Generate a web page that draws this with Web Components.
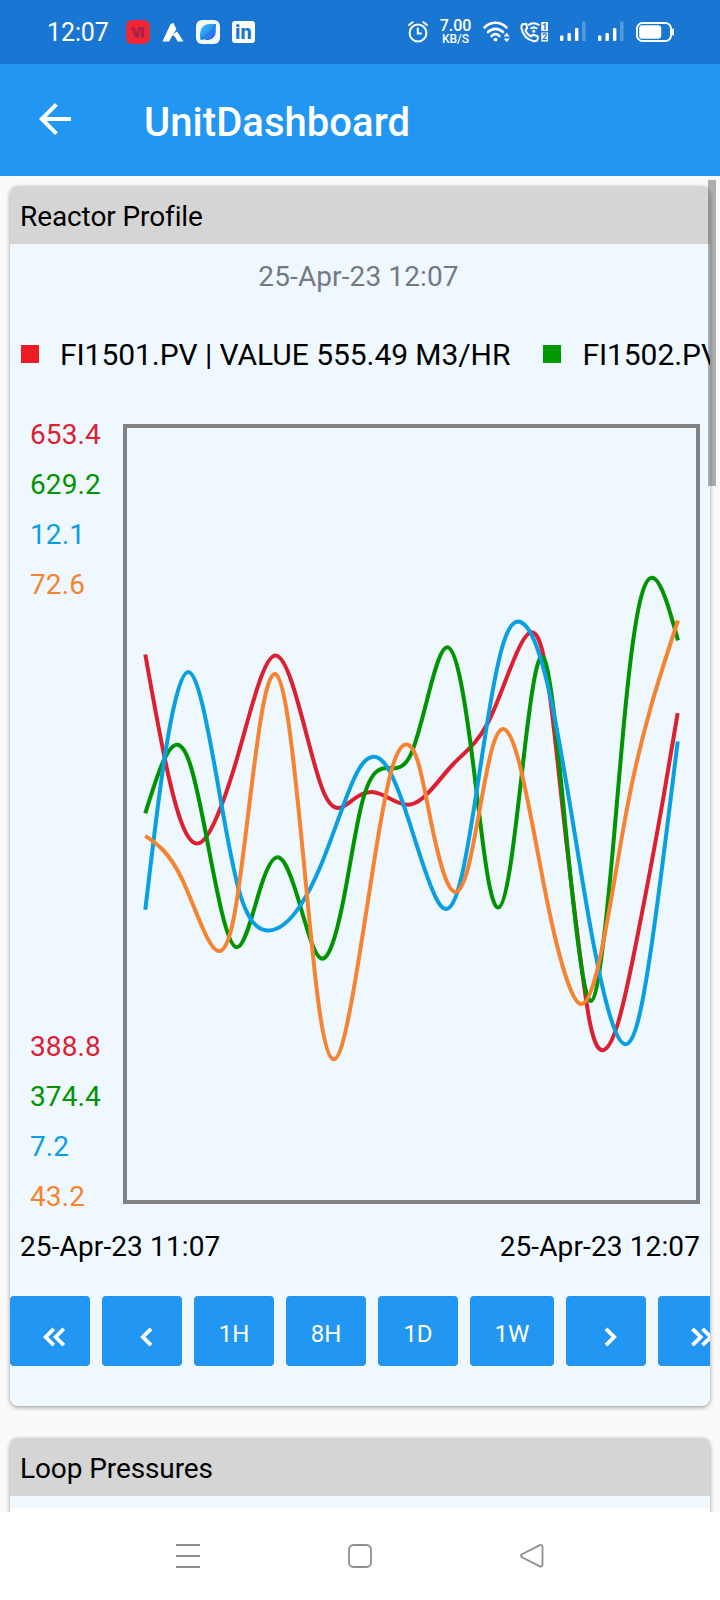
<!DOCTYPE html>
<html lang="en">
<head>
<meta charset="utf-8">
<title>UnitDashboard</title>
<style>
    body {
        margin: 0;
        font-family: Roboto, "Liberation Sans", sans-serif;
        --primary: #2196f3;
        --primary-dark: #1976d2;
        --page: #fafafa;
        --card: #eff7ff;
        --header: #d5d5d5;
    }
</style>
</head>
<body>
<unit-dashboard></unit-dashboard>

<script>
class StatusBar extends HTMLElement {
    constructor() {
        super();
        this.attachShadow({mode: 'open'});
    }

    connectedCallback() {
        const signal = `
            <svg width="26" height="22" viewBox="0 0 26 22" fill="#fff">
                <rect x="0" y="14.5" width="3.4" height="5.5" rx="1"/>
                <rect x="7.5" y="12" width="3.4" height="8" rx="1"/>
                <rect x="15" y="7" width="3.4" height="13" rx="1"/>
                <rect x="22" y="0.5" width="3.6" height="19.5" rx="1" opacity=".25"/>
            </svg>`;

        this.shadowRoot.innerHTML = `
            <style>
                :host {
                    display: flex;
                    align-items: center;
                    justify-content: space-between;
                    box-sizing: border-box;
                    height: 64px;
                    padding: 0 46px 0 47px;
                    background-color: var(--primary-dark);
                    color: #fff;
                }

                .group {
                    display: flex;
                    align-items: center;
                }

                svg {
                    display: block;
                    overflow: visible;
                }

                .clock {
                    width: 79px;
                    padding-top: 1px;
                    font-size: 25px;
                    line-height: 30px;
                    letter-spacing: -0.1px;
                }

                .left {
                    gap: 12px;
                }

                .left .clock {
                    margin-right: -12px;
                }

                .speed {
                    display: flex;
                    flex-direction: column;
                    align-items: center;
                    width: 31px;
                    margin: 0 12px;
                    font-size: 16px;
                    line-height: 13.5px;
                    font-weight: 500;
                    letter-spacing: -0.1px;
                }

                .speed span + span {
                    font-size: 12px;
                    line-height: 12.5px;
                    letter-spacing: 0;
                }
            </style>
            <div class="group left">
                <span class="clock">12:07</span>
                <svg width="24" height="24" viewBox="0 0 24 24">
                    <rect width="24" height="24" rx="6" fill="#ee2737"/>
                    <text x="12" y="17" text-anchor="middle" font-size="13.5" font-weight="700" fill="#ee2737" stroke="#a02050" stroke-width="1.2">V!</text>
                </svg>
                <svg width="22" height="24" viewBox="0 0 22 24" fill="#fff">
                    <path d="M8.6 4L11.6 3L14.3 9.2L10.5 15.2L7.2 21.5H0.5Z"/>
                    <path d="M10.2 14.6L15.2 11.6L21.5 21.5H15.8Q14 17 10.2 14.6Z"/>
                </svg>
                <svg width="24" height="24" viewBox="0 0 24 24">
                    <defs>
                        <linearGradient id="leaf" x1="0" y1="0" x2="1" y2="1">
                            <stop offset="0" stop-color="#35c8f4"/>
                            <stop offset=".55" stop-color="#2a8ef0"/>
                            <stop offset="1" stop-color="#2a4bea"/>
                        </linearGradient>
                    </defs>
                    <rect width="24" height="24" rx="6" fill="#f4f6fa"/>
                    <path d="M4.5 20C2.8 12 5.5 4.2 13 4L20 4L19.8 10C20.5 17.5 14 21.5 8 19.6Z" fill="url(#leaf)"/>
                    <path d="M5 19Q14 15 19.5 5.5" fill="none" stroke="#1a68d8" stroke-width=".8"/>
                </svg>
                <svg width="23" height="22" viewBox="0 0 23 22">
                    <rect width="23" height="22" rx="3" fill="#fff"/>
                    <text x="11.4" y="18.3" text-anchor="middle" font-size="20" font-weight="800" fill="#1976d2">in</text>
                </svg>
            </div>
            <div class="group">
                <svg width="20" height="22" viewBox="0 0 20 22" fill="none" stroke="#fff" stroke-width="2" stroke-linecap="round">
                    <circle cx="10" cy="12" r="8.4"/>
                    <path d="M9.8 7.5V12.6H13M1 4L4.6 1.2M19 4L15.4 1.2"/>
                </svg>
                <div class="speed"><span>7.00</span><span>KB/S</span></div>
                <svg width="28" height="22" viewBox="0 0 28 22" fill="none" stroke="#fff" stroke-width="2.6" stroke-linecap="round">
                    <path d="M1.5 6.5C8 .2 17 .2 23.5 6.5M5 11C9.5 6.8 15.5 6.8 20 11M8.6 15C11 12.8 14 12.8 16.4 15"/>
                    <circle cx="12.5" cy="18.6" r="1.9" fill="#fff" stroke="none"/>
                    <path d="M20.7 15.4L23.7 11.8L26.7 15.4ZM20.7 17.6L23.7 21.2L26.7 17.6Z" fill="#fff" stroke="none"/>
                </svg>
                <svg style="margin-left: 9px" width="29" height="22" viewBox="0 0 29 22" fill="none" stroke="#fff" stroke-width="2">
                    <path d="M3.2 3L6.2 2.8L7.2 7.2L5.3 9.2Q7 13.5 11 15.5L13 13.8L17.6 15.2L17.8 18Q17 20.5 14 20.2Q3.5 18 1.4 7Q1.2 4 3.2 3Z" stroke-linejoin="round"/>
                    <path d="M8 4.3Q13.5 0 19.5 4.3M10.5 7.7Q13.8 5 17.2 7.7"/>
                    <circle cx="13.8" cy="10.3" r="1.5" fill="#fff" stroke="none"/>
                    <path d="M21.3 1H28V10H21.3ZM21.3 11.5H28V20.5H21.3Z" fill="#fff" stroke="none"/>
                    <g font-size="9" font-weight="700" text-anchor="middle" fill="#1976d2" stroke="none">
                        <text x="24.6" y="8.7">1</text>
                        <text x="24.6" y="19.2">2</text>
                    </g>
                </svg>
                <div class="group" style="gap: 12px; margin: 0 12px 0 11px">${signal}${signal}</div>
                <svg width="38" height="20" viewBox="0 0 38 20">
                    <rect x="1" y="1" width="34" height="18" rx="5.5" fill="none" stroke="#fff" stroke-width="2"/>
                    <rect x="3.2" y="3.2" width="22" height="13.6" rx="3" fill="#fff"/>
                    <rect x="36" y="6.5" width="2" height="7" rx="1" fill="#fff"/>
                </svg>
            </div>
        `;
    }
}

class AppBar extends HTMLElement {
    constructor() {
        super();
        this.attachShadow({mode: 'open'});
    }

    connectedCallback() {
        this.shadowRoot.innerHTML = `
            <style>
                :host {
                    display: flex;
                    align-items: center;
                    gap: 73px;
                    box-sizing: border-box;
                    height: 112px;
                    padding: 0 39px;
                    background-color: var(--primary);
                    color: #fff;
                }

                svg {
                    display: block;
                    margin-top: -2px;
                }

                h1 {
                    margin: 6px 0 0;
                    font-size: 40px;
                    line-height: 48px;
                    font-weight: 500;
                    letter-spacing: 0.05px;
                }
            </style>
            <svg width="32" height="32" viewBox="4 4 16 16" fill="#fff">
                <path d="M20 11H7.83l5.59-5.59L12 4l-8 8 8 8 1.41-1.41L7.83 13H20v-2z"/>
            </svg>
            <h1><slot></slot></h1>
        `;
    }
}

class DashboardCard extends HTMLElement {
    constructor() {
        super();
        this.attachShadow({mode: 'open'});
    }

    connectedCallback() {
        this.shadowRoot.innerHTML = `
            <style>
                :host {
                    display: flex;
                    flex-direction: column;
                    flex: none;
                    box-sizing: border-box;
                    border-radius: 8px;
                    background-color: var(--card);
                    box-shadow: 0 2px 4px rgba(0, 0, 0, .28), 0 0 4px rgba(0, 0, 0, .12);
                    overflow: hidden;
                }

                h2 {
                    flex: none;
                    box-sizing: border-box;
                    height: 58px;
                    margin: 0;
                    padding: 14px 10px 0;
                    background-color: var(--header);
                    color: #000;
                    font-size: 28px;
                    line-height: 33px;
                    font-weight: 400;
                    letter-spacing: -0.1px;
                }
            </style>
            <h2>${this.getAttribute('heading')}</h2>
            <slot></slot>
        `;
    }
}

class TrendLegend extends HTMLElement {
    constructor() {
        super();
        this.attachShadow({mode: 'open'});
    }

    connectedCallback() {
        this.shadowRoot.innerHTML = `
            <style>
                :host {
                    display: flex;
                    gap: 33px;
                    padding-left: 11px;
                    overflow: hidden;
                    color: #000;
                    font-size: 30px;
                    line-height: 36px;
                    letter-spacing: -0.06px;
                    white-space: nowrap;
                }

                .item {
                    display: flex;
                    flex: none;
                    align-items: center;
                    gap: 21px;
                }

                i {
                    width: 18px;
                    height: 18px;
                    margin-bottom: 2px;
                }
            </style>
            <div class="item"><i style="background-color: #ed1c24"></i><span>FI1501.PV | VALUE 555.49 M3/HR</span></div>
            <div class="item"><i style="background-color: #009900"></i><span>FI1502.PV</span></div>
        `;
    }
}

// x, y pairs in page units, in drawing order
const SERIES = [
    {
        color: '#dc2030', max: '653.4', min: '388.8',
        points: [145.3,654.5, 165.7,763, 182,824, 199,843.2, 215,821, 238.3,754, 258,686, 275,655.6, 292,683, 311.7,754, 324,793, 338.3,808, 354,799, 371.7,792, 391.7,799.5, 410,804.6, 428.3,792.8, 453.3,764, 488.3,722, 516.7,653, 531,632.4, 545,663, 561.7,800, 580,955, 590,1023, 603.7,1050, 618,1023, 636.7,940, 663.3,798, 677.7,713.2]
    },
    {
        color: '#009400', max: '629.2', min: '374.4',
        points: [145.3,813.3, 163,762, 178,744.8, 190,764, 206.7,838, 222,913, 236.7,947.3, 261.7,884, 278.3,857.3, 300,905, 321,958.4, 345,891.8, 361,807, 375,773, 396.7,768, 411,754, 428.3,695, 447.7,647.3, 461,683, 475,779, 487,872, 498.3,907.6, 510,868, 523.3,761, 543.7,658, 565,822, 579,950, 591,1001, 602,953, 613.3,844.4, 626,702, 640,601.4, 652,577.7, 678,640.4]
    },
    {
        color: '#0a9fe0', max: '12.1', min: '7.2',
        points: [145.3,909.8, 165,755, 176,698, 189,672.1, 202,703, 221.7,805.7, 238.3,888, 250,918, 266.7,930.4, 300,906, 321,865, 345,801, 359.3,768.5, 373.3,756.8, 389,770, 403.3,804.2, 430,884, 446.3,909, 460,883, 477,789, 490,706, 503.3,643.5, 519.3,621.7, 534,640, 550,695, 590,924.8, 611,1019, 625.3,1044.2, 638,1021, 655,921, 677.7,741.5]
    },
    {
        color: '#f58330', max: '72.6', min: '43.2',
        points: [145.3,835.9, 163,850, 181.7,878.4, 204,931, 219,951.1, 234,917, 248.3,813, 262,712, 275.3,674, 288,719, 305,874.6, 319,1007, 333.3,1059.3, 352,999, 375,856, 391,772, 407,744.5, 418,762, 431.7,825, 444,874, 456,891.9, 468,868, 481.7,798.5, 492,749, 504,729.2, 519,762, 546.7,899, 567,980, 581.3,1004, 597,971, 626.7,810, 651.7,704, 678,620.5]
    }
];

// Natural cubic spline through every point, written out as bezier segments
function splinePath(flat) {
    const x = flat.filter((v, i) => i % 2 === 0);
    const y = flat.filter((v, i) => i % 2 === 1);
    const n = x.length - 1;
    const upper = [0];
    const rhs = [0];
    const second = new Array(n + 1).fill(0);

    for (let i = 1; i < n; i++) {
        const h0 = x[i] - x[i - 1];
        const h1 = x[i + 1] - x[i];
        const pivot = 2 * (h0 + h1) - h0 * upper[i - 1];
        const jump = 6 * ((y[i + 1] - y[i]) / h1 - (y[i] - y[i - 1]) / h0);
        upper[i] = h1 / pivot;
        rhs[i] = (jump - h0 * rhs[i - 1]) / pivot;
    }
    for (let i = n - 1; i > 0; i--) {
        second[i] = rhs[i] - upper[i] * second[i + 1];
    }

    let d = `M${x[0]},${y[0]}`;
    for (let i = 0; i < n; i++) {
        const h = x[i + 1] - x[i];
        const chord = (y[i + 1] - y[i]) / h;
        const m0 = chord - h * (2 * second[i] + second[i + 1]) / 6;
        const m1 = chord + h * (second[i] + 2 * second[i + 1]) / 6;
        d += `C${x[i] + h / 3},${y[i] + m0 * h / 3} ${x[i + 1] - h / 3},${y[i + 1] - m1 * h / 3} ${x[i + 1]},${y[i + 1]}`;
    }
    return d;
}

class TrendPlot extends HTMLElement {
    constructor() {
        super();
        this.attachShadow({mode: 'open'});
    }

    connectedCallback() {
        const labels = key => SERIES.map(s => `<span style="color: ${s.color}">${s[key]}</span>`).join('');

        this.shadowRoot.innerHTML = `
            <style>
                :host {
                    display: flex;
                    height: 780px;
                    padding: 0 10px 0 20px;
                }

                .axis {
                    display: flex;
                    flex-direction: column;
                    justify-content: space-between;
                    flex: none;
                    width: 93px;
                    margin: -14px 0 -18px;
                    font-size: 28px;
                    line-height: 50px;
                    letter-spacing: 0.1px;
                }

                .axis div {
                    display: flex;
                    flex-direction: column;
                }

                .plot {
                    flex: 1;
                    box-sizing: border-box;
                    border: 4px solid #808284;
                }

                svg {
                    display: block;
                    width: 100%;
                    height: 100%;
                }
            </style>
            <div class="axis">
                <div>${labels('max')}</div>
                <div>${labels('min')}</div>
            </div>
            <div class="plot">
                <svg viewBox="127 428 569 772" fill="none" stroke-width="4">
                    ${SERIES.map(s => `<path stroke="${s.color}" d="${splinePath(s.points)}"/>`).join('')}
                </svg>
            </div>
        `;
    }
}

class RangeBar extends HTMLElement {
    constructor() {
        super();
        this.attachShadow({mode: 'open'});
    }

    connectedCallback() {
        this.shadowRoot.innerHTML = `
            <style>
                :host {
                    display: flex;
                    gap: 12px;
                    overflow: hidden;
                }

                button {
                    display: flex;
                    flex: none;
                    align-items: center;
                    justify-content: center;
                    width: 80px;
                    height: 70px;
                    padding: 6px 0 0;
                    border: none;
                    border-radius: 4px;
                    background-color: var(--primary);
                    color: #fff;
                    font: 400 24px/28px Roboto, "Liberation Sans", sans-serif;
                }

                button.wide {
                    width: 84px;
                }

                svg {
                    display: block;
                    margin: 5px 0 0 7px;
                    fill: none;
                    stroke: #fff;
                    stroke-width: 3.8;
                }
            </style>
            <button><svg width="22" height="20"><path d="M10.8 1.8L2.6 10L10.8 18.2M20.8 1.8L12.6 10L20.8 18.2"/></svg></button>
            <button><svg width="14" height="20"><path d="M12 1.8L3.8 10L12 18.2"/></svg></button>
            <button>1H</button>
            <button>8H</button>
            <button>1D</button>
            <button class="wide">1W</button>
            <button><svg width="14" height="20"><path d="M3 1.8L11.2 10L3 18.2"/></svg></button>
            <button><svg width="22" height="20"><path d="M1.5 1.8L9.7 10L1.5 18.2M11.5 1.8L19.7 10L11.5 18.2"/></svg></button>
        `;
    }
}

class NavigationBar extends HTMLElement {
    constructor() {
        super();
        this.attachShadow({mode: 'open'});
    }

    connectedCallback() {
        this.shadowRoot.innerHTML = `
            <style>
                :host {
                    display: flex;
                    align-items: center;
                    justify-content: center;
                    gap: 148px;
                    height: 88px;
                    background-color: #fff;
                }

                svg {
                    display: block;
                    fill: none;
                    stroke: #8e8e8e;
                    stroke-width: 1.8;
                }
            </style>
            <svg width="24" height="24"><path d="M0 1H24M0 12H24M0 23H24"/></svg>
            <svg width="24" height="24"><rect x="1" y="1" width="22" height="22" rx="4.5"/></svg>
            <svg width="24" height="24"><path d="M2 10.3L19.8 1.2Q22.5 .3 22.5 3V20.5Q22.5 23.2 19.8 22.3L2 13.3Q0 11.8 2 10.3Z"/></svg>
        `;
    }
}

class UnitDashboard extends HTMLElement {
    constructor() {
        super();
        this.attachShadow({mode: 'open'});
    }

    connectedCallback() {
        this.shadowRoot.innerHTML = `
            <style>
                :host {
                    display: flex;
                    flex-direction: column;
                    height: 1600px;
                    overflow: hidden;
                    background-color: var(--page);
                }

                main {
                    position: relative;
                    display: flex;
                    flex: 1;
                    flex-direction: column;
                    gap: 32px;
                    min-height: 0;
                    box-sizing: border-box;
                    padding: 10px 10px 0;
                    overflow: hidden;
                }

                .reactor {
                    height: 1220px;
                }

                .loop {
                    height: 300px;
                }

                .stamp {
                    margin-top: 16px;
                    color: #737a85;
                    font-size: 28px;
                    line-height: 34px;
                    letter-spacing: 0.12px;
                    text-align: center;
                    padding-right: 3px;
                }

                trend-legend {
                    margin-top: 43px;
                }

                trend-plot {
                    margin-top: 51px;
                }

                .range {
                    display: flex;
                    justify-content: space-between;
                    margin: 26px 10px 33px;
                    color: #000;
                    font-size: 28px;
                    line-height: 33px;
                    letter-spacing: 0.12px;
                }

                .empty {
                    flex: 1;
                    margin-top: 12px;
                    background-color: #fff;
                }

                .scrollbar {
                    position: absolute;
                    top: 4px;
                    right: 4px;
                    width: 8px;
                    height: 306px;
                    background-color: rgba(0, 0, 0, .3);
                }
            </style>
            <status-bar></status-bar>
            <app-bar>UnitDashboard</app-bar>
            <main>
                <dashboard-card class="reactor" heading="Reactor Profile">
                    <div class="stamp">25-Apr-23 12:07</div>
                    <trend-legend></trend-legend>
                    <trend-plot></trend-plot>
                    <div class="range"><span>25-Apr-23 11:07</span><span>25-Apr-23 12:07</span></div>
                    <range-bar></range-bar>
                </dashboard-card>
                <dashboard-card class="loop" heading="Loop Pressures">
                    <div class="empty"></div>
                </dashboard-card>
                <div class="scrollbar"></div>
            </main>
            <navigation-bar></navigation-bar>
        `;
    }
}

customElements.define('status-bar', StatusBar);
customElements.define('app-bar', AppBar);
customElements.define('dashboard-card', DashboardCard);
customElements.define('trend-legend', TrendLegend);
customElements.define('trend-plot', TrendPlot);
customElements.define('range-bar', RangeBar);
customElements.define('navigation-bar', NavigationBar);
customElements.define('unit-dashboard', UnitDashboard);
</script>
</body>
</html>
